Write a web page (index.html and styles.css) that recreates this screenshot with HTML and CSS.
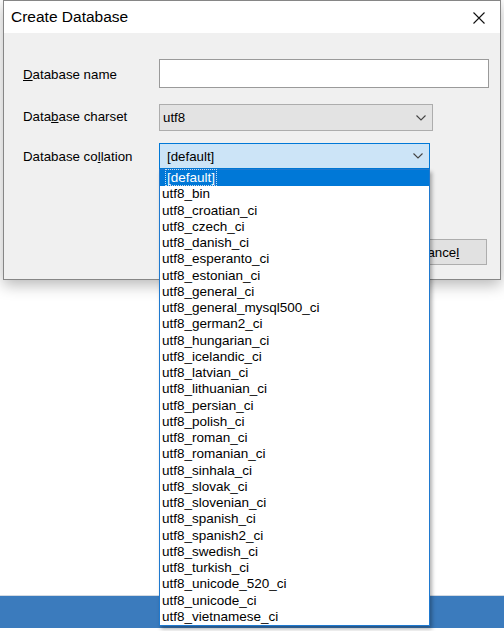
FILE: index.html
```html
<!DOCTYPE html>
<html>
<head>
<meta charset="utf-8">
<link rel="stylesheet" href="styles.css">
</head>
<body>
<div class="screen">
  <div class="backdrop">
    <div class="app-strip"></div>
  </div>

  <div class="dialog">
    <div class="titlebar">
      <span class="title">Create Database</span>
      <svg class="close" width="12" height="12" viewBox="0 0 12 12"><path d="M0.5 0.5L11.5 11.5M11.5 0.5L0.5 11.5" stroke="#111" stroke-width="1.1" fill="none"/></svg>
    </div>
    <div class="content">
      <div class="row row-name">
        <label><u>D</u>atabase name</label>
        <div class="textbox"></div>
      </div>
      <div class="row row-charset">
        <label>Data<u>b</u>ase charset</label>
        <div class="select select-charset">
          <span>utf8</span>
          <svg class="chev" width="10" height="6" viewBox="0 0 10 6"><path d="M0.5 0.5L5 5L9.5 0.5" stroke="#444" stroke-width="1.1" fill="none"/></svg>
        </div>
      </div>
      <div class="row row-collation">
        <label>Database co<u>l</u>lation</label>
        <div class="select select-collation">
          <span>[default]</span>
          <svg class="chev" width="10" height="6" viewBox="0 0 10 6"><path d="M0.5 0.5L5 5L9.5 0.5" stroke="#444" stroke-width="1.1" fill="none"/></svg>
        </div>
      </div>
      <div class="buttons">
        <div class="btn">OK</div>
        <div class="btn">Cance<u>l</u></div>
      </div>
    </div>
  </div>

  <ul class="popup">
    <li class="selected"><span class="focus">[default]</span></li>
    <li>utf8_bin</li>
    <li>utf8_croatian_ci</li>
    <li>utf8_czech_ci</li>
    <li>utf8_danish_ci</li>
    <li>utf8_esperanto_ci</li>
    <li>utf8_estonian_ci</li>
    <li>utf8_general_ci</li>
    <li>utf8_general_mysql500_ci</li>
    <li>utf8_german2_ci</li>
    <li>utf8_hungarian_ci</li>
    <li>utf8_icelandic_ci</li>
    <li>utf8_latvian_ci</li>
    <li>utf8_lithuanian_ci</li>
    <li>utf8_persian_ci</li>
    <li>utf8_polish_ci</li>
    <li>utf8_roman_ci</li>
    <li>utf8_romanian_ci</li>
    <li>utf8_sinhala_ci</li>
    <li>utf8_slovak_ci</li>
    <li>utf8_slovenian_ci</li>
    <li>utf8_spanish_ci</li>
    <li>utf8_spanish2_ci</li>
    <li>utf8_swedish_ci</li>
    <li>utf8_turkish_ci</li>
    <li>utf8_unicode_520_ci</li>
    <li>utf8_unicode_ci</li>
    <li>utf8_vietnamese_ci</li>
  </ul>
</div>
</body>
</html>
```

FILE: styles.css
```css
html, body {
  margin: 0;
  padding: 0;
  background: #fff;
}

.screen {
  position: relative;
  width: 504px;
  height: 631px;
  overflow: hidden;
  background: #fff;
  font-family: "Liberation Sans", Arial, sans-serif;
  color: #000;
}

.backdrop {
  padding-top: 595px;
}

.app-strip {
  height: 32px;
  border-top: 1px solid #d3dae2;
  background: #3b7bbd;
}

.dialog {
  position: absolute;
  left: 3px;
  top: 0;
  width: 498px;
  height: 280px;
  box-sizing: border-box;
  border: 1px solid #868686;
  background: #f0f0f0;
  box-shadow: 0 5px 14px rgba(0, 0, 0, 0.28);
}

.titlebar {
  height: 32px;
  background: #fff;
  display: flex;
  align-items: center;
  justify-content: space-between;
  padding: 0 15px 0 7px;
}

.title {
  font-size: 15.5px;
  position: relative;
  top: 0px;
}

.close {
  display: block;
  margin-top: 2px;
}

.content {
  padding: 26px 11px 0 19px;
}

.row {
  display: grid;
  grid-template-columns: 136px auto;
  align-items: center;
  font-size: 13.3px;
}

.row label u,
.btn u {
  text-decoration: underline;
  text-underline-offset: 1px;
}

.row-name {
  height: 29px;
}

.row-name label {
  position: relative;
  top: 1px;
}

.textbox {
  width: 330px;
  height: 29px;
  box-sizing: border-box;
  border: 1px solid #9a9a9a;
  background: #fff;
}

.row-charset {
  margin-top: 16px;
  height: 27px;
}

.row-charset label {
  position: relative;
  top: -1px;
}

.row-collation {
  margin-top: 12px;
  height: 26px;
}

.select {
  display: flex;
  align-items: center;
  box-sizing: border-box;
  padding-right: 6px;
  font-size: 13.3px;
}

.select-charset {
  width: 274px;
  height: 27px;
  border: 1px solid #adadad;
  background: #e3e3e3;
  padding-left: 3px;
}

.select-collation {
  width: 271px;
  height: 26px;
  border: 1px solid #0078d7;
  background: #cce4f7;
  padding-left: 7px;
}

.chev {
  display: block;
  margin-left: auto;
}

.buttons {
  margin-top: 70px;
  display: flex;
  justify-content: flex-end;
  gap: 9px;
  padding-right: 2px;
}

.btn {
  width: 97px;
  height: 26px;
  box-sizing: border-box;
  border: 1px solid #adadad;
  background: #e1e1e1;
  display: flex;
  align-items: center;
  justify-content: center;
  font-size: 13.3px;
}

.popup {
  position: absolute;
  left: 159px;
  top: 169px;
  width: 271px;
  box-sizing: border-box;
  margin: 0;
  padding: 0;
  list-style: none;
  border: 1px solid #1f79cf;
  background: #fff;
  box-shadow: 2px 3px 4px rgba(0, 0, 0, 0.32);
  font-size: 13.5px;
}

.popup li {
  height: 16.25px;
  line-height: 16.25px;
  padding-left: 2px;
  white-space: nowrap;
}

.popup li.selected {
  background: #0078d7;
  color: #fff;
}

.focus {
  margin-left: 4px;
  padding: 0 1px;
  outline: 1px dotted rgba(255, 255, 255, 0.75);
  outline-offset: 0;
}
```
